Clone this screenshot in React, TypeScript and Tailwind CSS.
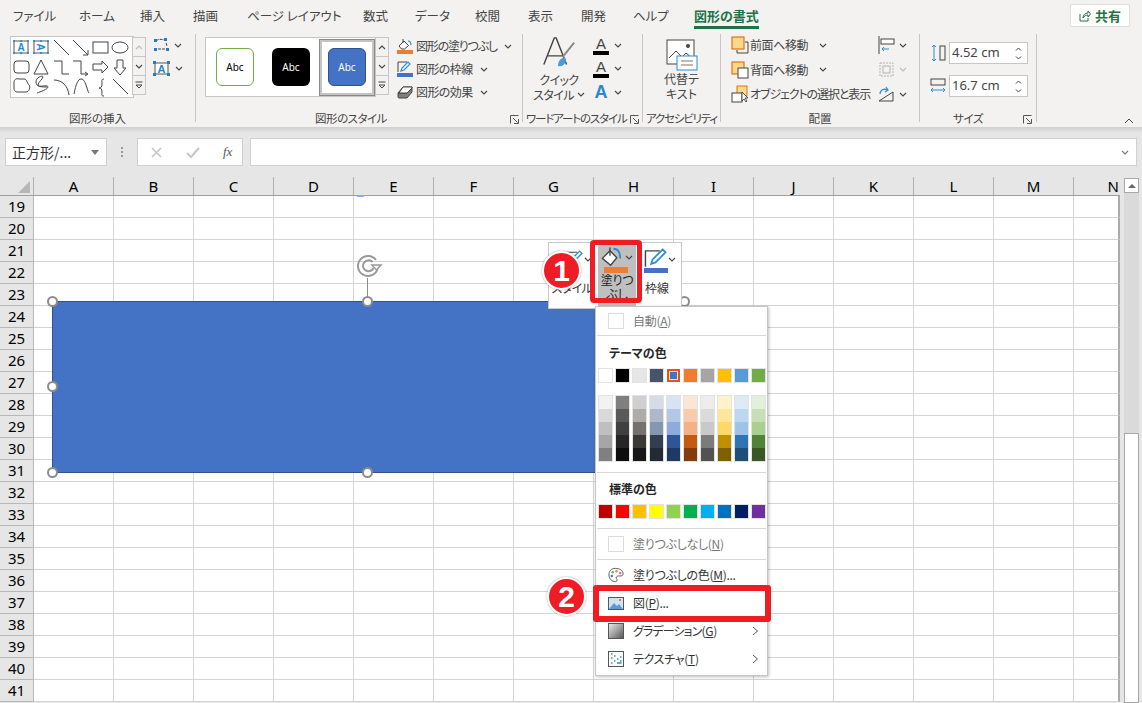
import React from "react";

const COLS = ["A","B","C","D","E","F","G","H","I","J","K","L","M","N"];
const ROWS = Array.from({ length: 23 }, (_, i) => 19 + i);
const BASE = ["#ffffff","#000000","#e7e6e6","#44546a","#4472c4","#ed7d31","#a5a5a5","#ffc000","#5b9bd5","#70ad47"];
const STD = ["#c00000","#ff0000","#ffc000","#ffff00","#92d050","#00b050","#00b0f0","#0070c0","#002060","#7030a0"];
const SHADES = [
  ["#f2f2f2","#d9d9d9","#bfbfbf","#a6a6a6","#808080"],
  ["#7f7f7f","#595959","#404040","#262626","#0d0d0d"],
  ["#d0cece","#aeabab","#767171","#3b3838","#171717"],
  ["#d6dce5","#adb9ca","#8497b0","#333f50","#222a35"],
  ["#d9e2f3","#b4c7e7","#8faadc","#2f5597","#1f3864"],
  ["#fbe5d6","#f8cbad","#f4b183","#c55a11","#843c0c"],
  ["#ededed","#dbdbdb","#c9c9c9","#7b7b7b","#525252"],
  ["#fff2cc","#ffe699","#ffd966","#bf9000","#7f6000"],
  ["#deebf7","#bdd7ee","#9dc3e6","#2e75b6","#1f4e79"],
  ["#e2f0d9","#c5e0b4","#a9d18e","#548235","#385723"],
];
const TABS: [string, number][] = [["ファイル",13],["ホーム",79],["挿入",140],["描画",193],["ページ レイアウト",247],["数式",363],["データ",415],["校閲",475],["表示",528],["開発",581],["ヘルプ",633]];

function Chev({ c = "#444" }: { c?: string }) {
  return <svg width="8" height="5" viewBox="0 0 8 5" className="shrink-0"><path d="M1 1l3 3 3-3" fill="none" stroke={c} strokeWidth="1.1" /></svg>;
}
function Launcher({ className }: { className: string }) {
  return <svg width="9" height="9" viewBox="0 0 9 9" className={"absolute " + className}><path d="M.5 8.5v-8h8M3 3l4.5 4.5M8.500 4v4.500H4" fill="none" stroke="#555" strokeWidth="1" /></svg>;
}
function Sep() { return <div className="w-px h-[88px] bg-[#c8c6c4] shrink-0" />; }
function Label({ children, className = "" }: { children: React.ReactNode; className?: string }) {
  return <div className={"absolute left-0 right-0 top-[76px] h-[16px] text-center text-[11.5px] leading-[16px] text-[#444] " + className}>{children}</div>;
}
function Scroller({ dim }: { dim?: boolean }) {
  const b = "h-[20px] w-[14px] bg-[#f3f2f1] border border-[#c6c6c6] flex items-center justify-center -mb-px";
  return (
    <div className="flex flex-col -ml-px">
      <div className={b}><svg width="8" height="5" viewBox="0 0 8 5"><path d="M1 4l3-3 3 3" fill="none" stroke={dim ? "#bbb" : "#444"} strokeWidth="1.1" /></svg></div>
      <div className={b}><Chev /></div>
      <div className={b}><svg width="8" height="8" viewBox="0 0 8 8"><path d="M.5 1h7M1 4l3 3 3-3z" fill="none" stroke="#444" strokeWidth="1" /></svg></div>
    </div>
  );
}
function AbcSwatch({ cls, text }: { cls: string; text: string }) {
  return <div className={"w-[38px] h-[38px] rounded-[6px] flex items-center justify-center text-[10px] font-['Noto_Sans',sans-serif] " + cls + " " + text}>Abc</div>;
}
function Spin() {
  return (
    <div className="flex flex-col gap-[5px] mr-[5px]">
      <svg width="7" height="4" viewBox="0 0 7 4"><path d="M1 3.500l2.500-2.500 2.500 2.500" fill="none" stroke="#444" /></svg>
      <svg width="7" height="4" viewBox="0 0 7 4"><path d="M1 .5l2.500 2.500 2.500-2.500" fill="none" stroke="#444" /></svg>
    </div>
  );
}

function GalleryShapes() {
  const s = { fill: "none", stroke: "#444", strokeWidth: 1 };
  const h = (x: number, y: number) => <rect key={x + "-" + y} x={x - 0.9} y={y - 0.9} width="1.800" height="1.800" fill="#1e88d8" />;
  return (
    <svg width="122" height="60" viewBox="1 0 122 60" className="block">
      <rect x="4" y="4" width="14" height="12" fill="#fff" stroke="#555" />
      {[[4,4],[11,4],[18,4],[4,16],[11,16],[18,16]].map(([x,y]) => h(x,y))}
      <text x="11" y="14" textAnchor="middle" fontSize="10" fontWeight="700" fill="#1e88d8" fontFamily="Liberation Sans">A</text>
      <rect x="24" y="4" width="14" height="12" fill="#fff" stroke="#555" />
      {[[24,4],[31,4],[38,4],[24,16],[31,16],[38,16]].map(([x,y]) => h(x,y))}
      <g transform="rotate(90 31 10)"><text x="31" y="14" textAnchor="middle" fontSize="10" fontWeight="700" fill="#1e88d8" fontFamily="Liberation Sans">A</text></g>
      <path d="M44 3l15 15" {...s} />
      <path d="M63 3l15 15M78 13v5h-5" {...s} />
      <rect x="83" y="5" width="15" height="11" {...s} />
      <ellipse cx="110" cy="10.500" rx="8" ry="5.500" {...s} />
      <rect x="4" y="24" width="15" height="12" rx="3" {...s} />
      <path d="M31 23l7 14H24z" {...s} />
      <path d="M44 24h8v13h7" {...s} />
      <path d="M63 24h8v13h6M75 35l3 2-3 2" {...s} />
      <path d="M83 27h9v-3l6 6-6 6v-3h-9z" {...s} />
      <path d="M107 23h6v8h3l-6 7-6-7h3z" {...s} />
      <path d="M4 45c0-2 2-4 5-3l5 0c3 0 3 4 5 6s0 7-3 7H7c-2 0-3-2-3-4z" {...s} />
      <path d="M27 56c3-1 11-4 11-6 0-3-10 1-10-2 0-3 5-6 5-8s-7 0-7 5 6 5 11 5" {...s} />
      <path d="M44 43c8 0 14 6 15 15" {...s} />
      <path d="M64 57c2-10 4-15 7-15s4 3 6 9c1 3 1 4 2 5" {...s} />
      <path d="M94 42c-3 0-2 2-2 5s-1 4-3 4c2 0 3 1 3 4s-1 4 2 4" {...s} />
      <path d="M103 42l15 15" {...s} />
    </svg>
  );
}

function PaintBucket({ size = 16 }: { size?: number }) {
  return (
    <svg width={size} height={size} viewBox="0 0 16 16">
      <path d="M1 9l5.500-5.500 5 5L7 14z" fill="#fff" stroke="#444" />
      <path d="M6.500 1v6" stroke="#444" />
      <path d="M9 2c3 0 5 2 5 7" fill="none" stroke="#2a8dd4" strokeWidth="1.300" />
    </svg>
  );
}
function Pen({ w = 16 }: { w?: number }) {
  return (
    <svg width={w} height={w} viewBox="0 0 16 16">
      <path d="M1 13V2h10" fill="none" stroke="#444" />
      <path d="M5 11l1-3 7-7 2 2-7 7z" fill="#fff" stroke="#2a8dd4" strokeWidth="1.200" />
    </svg>
  );
}

function Ribbon() {
  return (
    <div className="h-[96px] pt-[3px] flex bg-[#f3f2f1]">
      {/* 図形の挿入 */}
      <div className="relative w-[195px] h-[92px] pt-[3px] pl-[10px] flex shrink-0">
        <div className="flex h-[60px]">
          <div className="w-[122px] h-[60px] bg-white border border-[#c6c6c6] box-content -mr-px -mt-px"><GalleryShapes /></div>
          <Scroller dim />
        </div>
        <div className="ml-[7px] -mt-[1px] flex flex-col gap-[5px]">
          <div className="flex items-center gap-[4px] h-[18px]">
            <svg width="17" height="14" viewBox="0 0 17 14"><path d="M3 3c2-2 5-2 8-1M5 11h8M13 5l1 3" fill="none" stroke="#444" strokeDasharray="3 1" /><g fill="#1e7fc8"><rect x="1" y="1" width="3" height="3" /><rect x="11" y="0" width="3" height="3" /><rect x="1" y="10" width="3" height="3" /><rect x="13" y="10" width="3" height="3" /></g></svg>
            <Chev />
          </div>
          <div className="flex items-center gap-[5px] h-[18px]">
            <svg width="17" height="15" viewBox="0 0 17 15"><rect x="2" y="2" width="13" height="11" fill="#fff" stroke="#555" /><text x="8.500" y="12" textAnchor="middle" fontSize="11" fontWeight="700" fill="#1e88d8" fontFamily="Liberation Sans">A</text><g fill="#1e7fc8"><rect x="0" y="0" width="3" height="3" /><rect x="14" y="0" width="3" height="3" /><rect x="0" y="12" width="3" height="3" /><rect x="14" y="12" width="3" height="3" /></g></svg>
            <Chev />
          </div>
        </div>
        <Label>図形の挿入</Label>
      </div>
      <Sep />
      {/* 図形のスタイル */}
      <div className="relative w-[326px] h-[92px] pt-[3px] pl-[9px] flex shrink-0">
        <div className="flex h-[60px]">
          <div className="w-[171px] h-[60px] bg-white border border-[#c6c6c6] flex items-center pl-[10px]">
            <AbcSwatch cls="bg-white border border-[#70ad47]" text="text-black" />
            <div className="w-[18px]" />
            <AbcSwatch cls="bg-black" text="text-white" />
            <div className="w-[9px]" />
            <div className="w-[56px] h-[57px] border-[3px] border-[#c4c4c4] outline outline-1 -outline-offset-1 outline-[#8a8a8a] flex items-center justify-center">
              <AbcSwatch cls="bg-[#4472c4] border border-[#2f528f]" text="text-white" />
            </div>
          </div>
          <Scroller />
        </div>
        <div className="ml-[8px] flex flex-col gap-[5px] text-[12px] leading-[18px] text-[#444]">
          {[
            [<svg key="a" width="16" height="16" viewBox="0 0 16 16"><path d="M2 8l5-5 4.500 4.500-4 3.500h-3z" fill="#fff" stroke="#444" /><path d="M6 1v4" stroke="#444" /><path d="M11 3c2 0 3 1 3 4" fill="none" stroke="#2a8dd4" strokeWidth="1.200" /><rect x="0" y="12" width="16" height="4" fill="#ed7d31" /></svg>, "図形の塗りつぶし", "tracking-[-1.2px]"],
            [<svg key="b" width="16" height="16" viewBox="0 0 16 16"><path d="M1 11V1h9" fill="none" stroke="#444" /><path d="M4 10l1-3 6-6 2 2-6 6z" fill="#fff" stroke="#2a8dd4" strokeWidth="1.200" /><rect x="0" y="12" width="16" height="4" fill="#4472c4" /></svg>, "図形の枠線", "tracking-[-0.6px]"],
            [<svg key="c" width="16" height="16" viewBox="0 0 16 16"><path d="M1 9l5-6h9v5l-5 6H2c-1 0-1-1-1-2z" fill="#7f7f7f" stroke="#444" /><path d="M1 9h9l5-6" fill="none" stroke="#444" /><path d="M6 3h9v1l-5 5H2z" fill="#fff" stroke="#444" /></svg>, "図形の効果", "tracking-[-0.6px]"],
          ].map(([ic, t, tr], i) => (
            <div key={i} className="flex items-center h-[18px]">
              <div className="w-[19px] shrink-0">{ic}</div>
              <span className={"mr-[7px] whitespace-nowrap " + (tr as string)}>{t as string}</span>
              <Chev />
            </div>
          ))}
        </div>
        <Label className="pr-[16px] tracking-[-0.5px]">図形のスタイル</Label>
        <Launcher className="right-[3px] top-[81px]" />
      </div>
      <Sep />
      {/* ワードアート */}
      <div className="relative w-[119px] h-[92px] flex shrink-0 text-[#444]">
        <div className="w-[70px] flex flex-col items-center text-[12px] leading-[15px] pl-[2px] pt-[2px]">
          <svg width="36" height="36" viewBox="0 0 36 38"><path d="M2 30L13 2h2l11 28M6 21h16" fill="none" stroke="#444" strokeWidth="1.500" /><path d="M34 7L22 22" stroke="#888" strokeWidth="2" /><path d="M17 32c0-6 3-9 7-9 2 1 2 4 0 6-2 3-5 3-7 3z" fill="#4a9bd9" /></svg>
          <span className="tracking-[-0.6px]">クイック</span>
          <span className="flex items-center gap-[3px] whitespace-nowrap tracking-[-0.6px]">スタイル<Chev /></span>
        </div>
        <div className="flex flex-col gap-[2px] pt-[1px]">
          {[0, 1].map((i) => (
            <div key={i} className="flex items-center gap-[5px] h-[21px]">
              <div className="w-[16px] flex flex-col items-center leading-[14px] text-[15px] font-['Liberation_Sans',sans-serif] font-light">
                A<div className="w-[16px] h-[4px] bg-black" />
              </div>
              <Chev />
            </div>
          ))}
          <div className="flex items-center gap-[5px] h-[22px]">
            <span className="w-[16px] text-center text-[18px] font-bold leading-none text-[#2e86d0] font-['Liberation_Sans',sans-serif]">A</span>
            <Chev />
          </div>
        </div>
        <Label className="text-left pl-[3px] tracking-[-1.15px] whitespace-nowrap">ワードアートのスタイル</Label>
        <Launcher className="right-[3px] top-[81px]" />
      </div>
      <Sep />
      {/* 代替テキスト */}
      <div className="relative w-[77px] h-[92px] pt-[4px] flex flex-col items-center shrink-0 text-[12px] leading-[15px] text-[#444]">
        <svg width="32" height="36" viewBox="0 0 32 36"><rect x="1" y="2" width="27" height="24" fill="#fff" stroke="#444" /><path d="M3 20l7-7 6 6 4-4 6 5" fill="none" stroke="#444" /><circle cx="22" cy="8" r="2" fill="#444" /><rect x="11" y="18" width="20" height="14" fill="#fff" stroke="#2a8dd4" /><path d="M15 23h12M15 27h12" stroke="#777" /></svg>
        <span className="-mt-[3px]">代替テ</span>
        <span>キスト</span>
        <Label className="tracking-[-1.2px] whitespace-nowrap">アクセシビリティ</Label>
      </div>
      <Sep />
      {/* 配置 */}
      <div className="relative w-[198px] h-[92px] pt-[2px] pl-[10px] flex shrink-0 text-[12px] text-[#444]">
        <div className="flex flex-col gap-[6.500px] w-[146px]">
          <div className="flex items-center h-[18px]">
            <svg width="18" height="18" viewBox="0 0 18 18" className="shrink-0"><rect x="1" y="1" width="12" height="12" fill="#fcd78c" stroke="#d9771c" strokeWidth="1.200" /><path d="M14 6h3v11H6v-3" fill="none" stroke="#444" /></svg>
            <span className="ml-[1px] whitespace-nowrap tracking-[-0.4px]">前面へ移動</span><span className="ml-[11px]"><Chev /></span>
          </div>
          <div className="flex items-center h-[18px]">
            <svg width="18" height="18" viewBox="0 0 18 18" className="shrink-0"><rect x="1" y="1" width="12" height="12" fill="#fcd78c" stroke="#d9771c" strokeWidth="1.200" /><rect x="7" y="7" width="10" height="10" fill="#fff" stroke="#444" /></svg>
            <span className="ml-[1px] whitespace-nowrap tracking-[-0.4px]">背面へ移動</span><span className="ml-[11px]"><Chev /></span>
          </div>
          <div className="flex items-center h-[18px]">
            <svg width="18" height="18" viewBox="0 0 18 18" className="shrink-0"><rect x="6" y="1" width="10" height="10" fill="#fcd78c" stroke="#d9771c" /><rect x="1" y="8" width="10" height="9" fill="#fff" stroke="#444" /><path d="M11 7v9l2-2 2 3 1-1-2-3h3z" fill="#fff" stroke="#333" strokeWidth=".8" /></svg>
            <span className="ml-[1px] whitespace-nowrap tracking-[-1.1px]">オブジェクトの選択と表示</span>
          </div>
        </div>
        <div className="flex flex-col gap-[6.500px] ml-[1px]">
          <div className="flex items-center gap-[4px] h-[18px]">
            <svg width="17" height="18" viewBox="0 0 17 18"><path d="M1 0v18" stroke="#444" /><rect x="3" y="3" width="13" height="5" fill="#fff" stroke="#444" /><path d="M11 13H4m2-2l-2 2 2 2" fill="none" stroke="#2a8dd4" /></svg>
            <Chev />
          </div>
          <div className="flex items-center gap-[4px] h-[18px] opacity-50">
            <svg width="17" height="17" viewBox="0 0 17 17"><rect x="2" y="2" width="13" height="13" fill="none" stroke="#777" strokeDasharray="2 1" /><rect x="5" y="5" width="7" height="7" fill="none" stroke="#777" /></svg>
            <Chev c="#888" />
          </div>
          <div className="flex items-center gap-[4px] h-[18px]">
            <svg width="17" height="17" viewBox="0 0 17 17"><path d="M1 15L15 6v9z" fill="none" stroke="#444" /><path d="M2 8c0-4 4-6 8-4M8 1l2 3-3 2" fill="none" stroke="#2a8dd4" strokeWidth="1.200" /></svg>
            <Chev />
          </div>
        </div>
        <Label>配置</Label>
      </div>
      <Sep />
      {/* サイズ */}
      <div className="relative w-[116px] h-[92px] pt-[8px] pl-[10px] flex flex-col gap-[11px] shrink-0 text-[#444]">
        <div className="flex items-center gap-[3px]">
          <svg width="16" height="18" viewBox="0 0 16 18"><rect x="10" y="2" width="5" height="14" fill="none" stroke="#444" /><path d="M4 1v16M2 3l2-2 2 2M2 15l2 2 2-2" fill="none" stroke="#2a8dd4" /></svg>
          <div className="w-[79px] h-[22px] bg-white border border-[#c6c6c6] flex items-center justify-between pl-[2px] text-[13px] font-['Noto_Sans',sans-serif]">4.52 cm<Spin /></div>
        </div>
        <div className="flex items-center gap-[3px]">
          <svg width="16" height="18" viewBox="0 0 16 18"><rect x="1" y="2" width="14" height="6" fill="none" stroke="#444" /><path d="M1 13h14M3 11l-2 2 2 2M13 11l2 2-2 2" fill="none" stroke="#2a8dd4" /></svg>
          <div className="w-[79px] h-[22px] bg-white border border-[#c6c6c6] flex items-center justify-between pl-[2px] text-[13px] font-['Noto_Sans',sans-serif]">16.7 cm<Spin /></div>
        </div>
        <Label className="pr-[20px] tracking-[-0.5px]">サイズ</Label>
        <Launcher className="right-[4px] top-[81px]" />
      </div>
      <Sep />
      <div className="flex-1 relative">
        <svg width="10" height="6" viewBox="0 0 10 6" className="absolute left-[87px] top-[84px]"><path d="M1 5l4-4 4 4" fill="none" stroke="#444" /></svg>
      </div>
    </div>
  );
}

function Sheet() {
  return (
    <div className="flex-1 flex bg-[#e6e6e6] overflow-hidden">
      <div className="w-[1120px] shrink-0 flex flex-col overflow-hidden">
        <div className="h-[18px] flex shrink-0 border-b border-[#9f9f9f] box-content text-[15px] leading-[18px] text-black font-['Noto_Sans',sans-serif]">
          <div className="w-[34px] shrink-0 border-r border-[#b0b0b0] relative">
            <div className="absolute right-[3px] bottom-[2px] w-0 h-0 border-l-[12px] border-l-transparent border-b-[12px] border-b-[#b7b7b7]" />
          </div>
          {COLS.map((c, i) => (
            <div key={c} className={(i === 13 ? "w-[46px] text-right pr-px" : "w-[80px] text-center border-r border-[#b0b0b0]") + " shrink-0"}>{c}</div>
          ))}
        </div>
        {ROWS.map((r) => (
          <div key={r} className="h-[22px] flex shrink-0">
            <div className="w-[34px] shrink-0 bg-[#e6e6e6] border-r border-b border-[#b8b8b8] text-[15px] leading-[21px] text-center text-black font-['Noto_Sans',sans-serif]">{r}</div>
            {COLS.map((c) => (
              <div key={c} className={(c === "N" ? "w-[46px] border-r-2 border-r-[#ababab]" : "w-[80px] border-r border-r-[#d4d4d4]") + " shrink-0 bg-white border-b border-b-[#d4d4d4]"} />
            ))}
          </div>
        ))}
      </div>
      <div className="ml-[4px] w-[15px] flex flex-col">
        <div className="mt-px w-[15px] h-[15px] bg-white border border-[#a8a8a8] flex items-center justify-center shrink-0">
          <div className="w-0 h-0 border-l-[4px] border-r-[4px] border-b-[4px] border-l-transparent border-r-transparent border-b-[#666]" />
        </div>
        <div className="h-[240px] bg-[#dadada] shrink-0" />
        <div className="flex-1 bg-white border border-[#a8a8a8]" />
      </div>
    </div>
  );
}

function Handle({ x, y }: { x: number; y: number }) {
  return <div className="absolute w-[11px] h-[11px] rounded-full bg-white border-2 border-[#8c8c8c]" style={{ left: x - 5, top: y - 5 }} />;
}

function ShapeObject() {
  return (
    <>
      <div className="absolute left-[52px] top-[301px] w-[632px] h-[172px] bg-[#4472c4] border border-[#2f528f]" />
      <div className="absolute left-[367px] top-[278px] w-px h-[23px] bg-[#8c8c8c]" />
      <svg width="28" height="24" viewBox="0 0 28 24" className="absolute left-[356px] top-[254px]">
        <path d="M20 6a10 10 0 1 0 1.500 9" fill="none" stroke="#999" strokeWidth="2" />
        <path d="M16.500 8a5.500 5.500 0 1 0 1 6" fill="none" stroke="#999" strokeWidth="2" />
        <path d="M16 11h9l-4.500 5z" fill="#fff" stroke="#999" strokeWidth="1.500" />
      </svg>
      <Handle x={52} y={301} /><Handle x={367} y={301} /><Handle x={684} y={301} />
      <Handle x={52} y={386} /><Handle x={52} y={472} /><Handle x={367} y={472} />
      <div className="absolute left-[356px] top-[195px] w-[9px] h-[2px] rounded-b-full bg-[#8aa9e6]" />
    </>
  );
}

function MiniToolbar() {
  return (
    <div className="absolute left-[548px] top-[242px] w-[134px] h-[67px] bg-white border border-[#c8c8c8] flex text-[12px] leading-[13px] text-[#333] overflow-hidden">
      <div className="w-[47px] flex flex-col items-end pt-[7px] pr-[4px] overflow-hidden">
        <div className="flex items-center gap-[1px]"><Pen w={18} /><Chev /></div>
        <span className="mt-[13px] whitespace-nowrap tracking-[-0.7px]">スタイル</span>
      </div>
      <div className="w-[38px] h-[62px] mt-[2px] bg-[#bfbfbf] flex flex-col items-center pt-[2px] overflow-hidden ml-[2px]">
        <div className="flex items-center gap-[2px] h-[20px]"><PaintBucket size={22} /><Chev /></div>
        <div className="w-[24px] h-[6px] bg-[#ed7d31] shrink-0 mr-[3px]" />
        <span className="whitespace-nowrap text-[#222] tracking-[-0.3px]">塗りつ</span>
        <span className="mt-[1px] whitespace-nowrap text-[#222]">ぶし</span>
      </div>
      <div className="flex-1 flex flex-col items-center pt-[6px] pl-[3px]">
        <div className="flex items-center gap-[1px] h-[20px]"><Pen w={23} /><Chev /></div>
        <div className="w-[24px] h-[5px] -mt-[1px] bg-[#4472c4] mr-[8px]" />
        <span className="mt-[8px] whitespace-nowrap mr-[6px]">枠線</span>
      </div>
    </div>
  );
}

function MenuRow({ icon, children, arrow, h, dim }: { icon: React.ReactNode; children: React.ReactNode; arrow?: boolean; h: number; dim?: boolean }) {
  return (
    <div className={"flex items-center pl-[12px] pr-[8px] text-[12px] tracking-[-0.3px] " + (dim ? "text-[#777]" : "text-[#333]")} style={{ height: h }}>
      <div className="w-[16px] h-[16px] shrink-0 flex items-center justify-center">{icon}</div>
      <span className="ml-[9px] flex-1 whitespace-nowrap">{children}</span>
      {arrow && <svg width="7" height="10" viewBox="0 0 7 10"><path d="M1 1l4.500 4-4.500 4" fill="none" stroke="#555" /></svg>}
    </div>
  );
}
const U = ({ children }: { children: string }) => <span className="underline">{children}</span>;

function FillMenu() {
  const swatch = "w-[13px] h-[13px] outline outline-1 outline-[#e2e2e2]";
  const Box = <div className="w-[16px] h-[16px] border border-[#dddddd] bg-white" />;
  return (
    <div className="absolute left-[595px] top-[306px] w-[173px] h-[370px] bg-white border border-[#c6c6c6] shadow-[1px_1px_3px_rgba(0,0,0,0.25)] flex flex-col">
      <MenuRow h={28} dim icon={Box}>自動(<U>A</U>)</MenuRow>
      <div className="h-px bg-[#d8d8d8] mx-[1px]" />
      <div className="h-[33px] pl-[13px] flex items-center text-[12px] font-bold text-[#262626]">テーマの色</div>
      <div className="flex gap-[4px] pl-[3px]">
        {BASE.map((c, i) => (
          <div key={c} className={i === 4 ? "w-[13px] h-[13px] border-2 border-[#e2541b] outline outline-1 outline-[#ffe294] -outline-offset-[3px]" : swatch} style={{ background: c }} />
        ))}
      </div>
      <div className="flex gap-[4px] pl-[3px] mt-[14px]">
        {SHADES.map((col, i) => (
          <div key={i} className="flex flex-col w-[13px] outline outline-1 outline-[#e2e2e2]">
            {col.map((c) => <div key={c} className="h-[13px]" style={{ background: c }} />)}
          </div>
        ))}
      </div>
      <div className="h-px bg-[#d8d8d8] mx-[1px] mt-[11px]" />
      <div className="h-[32px] pl-[13px] flex items-center text-[12px] font-bold text-[#262626]">標準の色</div>
      <div className="flex gap-[4px] pl-[3px]">
        {STD.map((c) => <div key={c} className={swatch} style={{ background: c }} />)}
      </div>
      <div className="h-px bg-[#d8d8d8] mx-[1px] mt-[10px]" />
      <MenuRow h={30} dim icon={Box}>塗りつぶしなし(<U>N</U>)</MenuRow>
      <div className="h-px bg-[#d8d8d8] mx-[1px]" />
      <MenuRow h={29} icon={<svg width="17" height="16" viewBox="0 0 17 16"><path d="M8 1C3 1 1 4 1 8s3 7 7 7c2 0 2-2 1-3s0-3 2-3h3c2 0 2-2 2-3 0-3-4-5-8-5z" fill="#fff" stroke="#555" /><circle cx="5" cy="5" r="1.300" fill="#70ad47" /><circle cx="9" cy="4" r="1.300" fill="#ed7d31" /><circle cx="13" cy="6" r="1.300" fill="#e05a9c" /><circle cx="4" cy="9" r="1.300" fill="#4472c4" /></svg>}>塗りつぶしの色(<U>M</U>)...</MenuRow>
      <MenuRow h={28} icon={<svg width="16" height="13" viewBox="0 0 16 13"><rect x=".5" y=".5" width="15" height="12" fill="#cfe3f5" stroke="#555" /><path d="M1 12l5-6 3 3 2-2 4 5z" fill="#5b9bd5" /><rect x="11" y="2" width="2" height="2" fill="#ed7d31" /></svg>}>図(<U>P</U>)...</MenuRow>
      <MenuRow h={28} arrow icon={<svg width="16" height="16" viewBox="0 0 16 16"><defs><linearGradient id="gr" x1="0" y1="0" x2="1" y2="1"><stop offset="0" stopColor="#eee" /><stop offset="1" stopColor="#555" /></linearGradient></defs><rect x=".5" y=".5" width="15" height="15" fill="url(#gr)" stroke="#555" /></svg>}><span className="tracking-[-0.9px]">グラデーション</span>(<U>G</U>)</MenuRow>
      <MenuRow h={28} arrow icon={<svg width="16" height="16" viewBox="0 0 16 16"><rect x=".5" y=".5" width="15" height="15" fill="#fff" stroke="#555" /><path d="M3 3h1.500M6 5h1.500M3 7h1.500M9 8h1.500M6 10h1.500M12 10h1.500M3 12h1.500M9 12h4.500M12 6h1.500" stroke="#2a8dd4" strokeWidth="1.500" /></svg>}>テクスチャ(<U>T</U>)</MenuRow>
    </div>
  );
}

function Badge({ n, x, y }: { n: string; x: number; y: number }) {
  return (
    <div className="absolute w-[39px] h-[39px] rounded-full bg-[#ee1c25] border-2 border-white shadow-[0_0_2px_rgba(0,0,0,0.4)] flex items-center justify-center text-white text-[30px] font-bold leading-none font-['Liberation_Sans',sans-serif]" style={{ left: x, top: y }}>{n}</div>
  );
}

export default function App() {
  return (
    <div className="relative w-[1142px] h-[703px] overflow-hidden bg-[#e6e6e6] flex flex-col font-['Noto_Sans_CJK_JP','Noto_Sans',sans-serif] [font-feature-settings:'palt']">
      {/* タブ */}
      <div className="h-[31px] bg-[#f3f2f1] relative shrink-0 flex items-start pt-[6px] text-[12.500px] leading-[20px] text-[#444]">
        {TABS.map(([t, x]) => <span key={t} className="absolute whitespace-nowrap" style={{ left: x }}>{t}</span>)}
        <div className="absolute left-[694px] top-[6px] h-[23px] border-b-[3px] border-[#217346] text-[13px] font-bold text-[#217346] whitespace-nowrap">図形の書式</div>
        <div className="absolute left-[1070px] top-[4px] w-[60px] h-[23px] bg-white border border-[#e1dfdd] rounded-[2px] flex items-center justify-center gap-[4px] text-[13px] font-bold text-[#217346]">
          <svg width="12" height="12" viewBox="0 0 12 12"><path d="M1 4v7h8V8M4 8c0-3 2-5 5-5V1l2.500 3L9 7V5C7 5 5 6 4 8z" fill="none" stroke="#217346" /></svg>
          共有
        </div>
      </div>
      <Ribbon />
      <div className="h-[6px] shrink-0 bg-gradient-to-b from-[#cfcfcf] to-[#e6e6e6]" />
      {/* 数式バー */}
      <div className="h-[44px] shrink-0 flex items-start pt-[5px] pl-[5px]">
        <div className="w-[102px] h-[28px] bg-white border border-[#d0d0d0] flex items-center justify-between pl-[6px] pr-[7px] text-[14px] text-[#333]">
          正方形/...
          <div className="w-0 h-0 border-l-[4px] border-r-[4px] border-t-[5px] border-l-transparent border-r-transparent border-t-[#777]" />
        </div>
        <div className="w-[30px] h-[28px] flex flex-col items-center justify-center gap-[2px]">
          <i className="w-[2px] h-[2px] bg-[#999]" /><i className="w-[2px] h-[2px] bg-[#999]" /><i className="w-[2px] h-[2px] bg-[#999]" />
        </div>
        <div className="w-[106px] h-[28px] bg-white border border-[#d0d0d0] flex items-center pl-[12px] gap-[23px]">
          <svg width="13" height="13" viewBox="0 0 13 13"><path d="M2 2l9 9M11 2l-9 9" stroke="#c6c6c6" strokeWidth="1.600" /></svg>
          <svg width="14" height="13" viewBox="0 0 14 13"><path d="M1 7l4 4 8-9" fill="none" stroke="#c6c6c6" strokeWidth="2" /></svg>
          <span className="font-['Liberation_Serif',serif] italic text-[13px] text-[#555]">fx</span>
        </div>
        <div className="ml-[7px] w-[887px] h-[28px] bg-white border border-[#d0d0d0] flex items-center justify-end pr-[7px]"><Chev c="#777" /></div>
      </div>
      <Sheet />
      <ShapeObject />
      <MiniToolbar />
      <FillMenu />
      {/* 注釈 */}
      <div className="absolute left-[590px] top-[240px] w-[52px] h-[63px] border-[5px] border-[#ee1c25] rounded-[4px]" />
      <Badge n="1" x={542} y={251} />
      <div className="absolute left-[593px] top-[585px] w-[178px] h-[37px] border-[6px] border-[#ee1c25] rounded-[3px]" />
      <Badge n="2" x={547} y={577} />
    </div>
  );
}
